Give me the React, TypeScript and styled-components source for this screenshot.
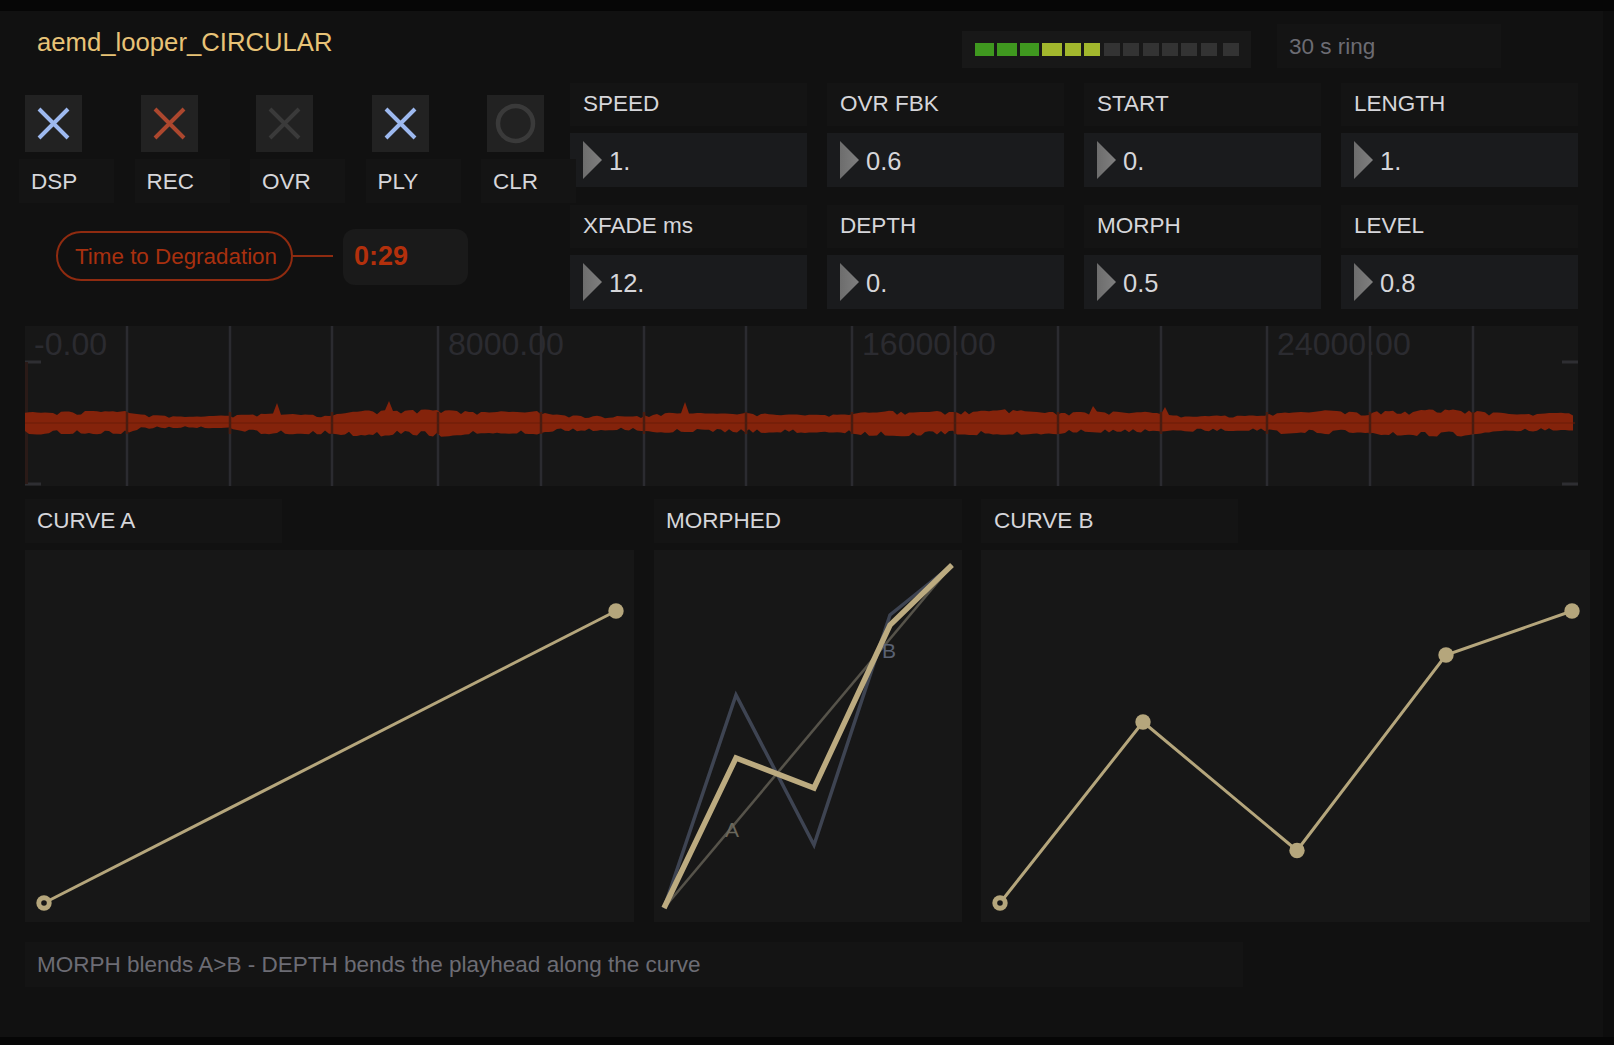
import React from "react";
import styled, { createGlobalStyle } from "styled-components";

const Global = createGlobalStyle`
  html, body {
    margin: 0;
    padding: 0;
    background: #111;
  }
  body {
    font-family: "Liberation Sans", Arial, sans-serif;
  }
`;

const Frame = styled.div`
  width: 1614px;
  height: 1045px;
  display: flex;
  flex-direction: column;
  overflow: hidden;
  background: #111;
`;

const EdgeBar = styled.div<{ h: number }>`
  flex: 0 0 ${(p) => p.h}px;
  background: #060606;
`;

const Middle = styled.div`
  flex: 1;
  display: flex;
  min-height: 0;
`;

const Body = styled.main`
  flex: 0 0 1603px;
  padding-left: 25px;
  box-sizing: border-box;
`;

const SideStrip = styled.div`
  flex: 1;
  background: #0d0d0d;
`;

const Header = styled.header`
  height: 72px;
  display: flex;
`;

const Title = styled.h1`
  width: 937px;
  margin: 0;
  padding: 15px 0 0 12px;
  box-sizing: border-box;
  font-size: 25.7px;
  line-height: 32px;
  font-weight: 400;
  color: #e8c377;
`;

const Meter = styled.div`
  width: 289px;
  height: 37px;
  margin-top: 20px;
  padding: 12px 0 0 13px;
  box-sizing: border-box;
  display: flex;
  background: #181818;
`;

const Segment = styled.span<{ w: number; gap: number; tone: string }>`
  width: ${(p) => p.w}px;
  height: 13px;
  margin-right: ${(p) => p.gap}px;
  background: ${(p) => p.tone};
`;

const Ring = styled.div`
  width: 224px;
  height: 44px;
  margin: 13px 0 0 26px;
  padding-left: 12px;
  box-sizing: border-box;
  background: #141414;
  color: #6c6c73;
  font-size: 22.5px;
  line-height: 46px;
`;

const Upper = styled.section`
  display: flex;
`;

const LeftColumn = styled.div`
  position: relative;
  z-index: 1;
  flex: 0 0 551px;
  min-width: 0;
  margin-left: -6px;
  padding-top: 12px;
`;

const Toggles = styled.div`
  display: grid;
  grid-template-columns: repeat(5, 95px);
  column-gap: 20.5px;
`;

const Toggle = styled.div`
  display: flex;
  flex-direction: column;
  gap: 7px;
`;

const ToggleButton = styled.div`
  width: 57px;
  height: 57px;
  margin-left: 6px;
  display: flex;
  align-items: center;
  justify-content: center;
  background: #222;
`;

const ToggleLabel = styled.div`
  height: 44px;
  padding-left: 12px;
  background: #141414;
  color: #d6d6da;
  font-size: 22.5px;
  line-height: 45px;
`;

const DegradationRow = styled.div`
  display: flex;
  align-items: flex-start;
  margin: 26px 0 0 37px;
`;

const Pill = styled.div`
  width: 237px;
  height: 50px;
  margin-top: 2px;
  padding-left: 3px;
  box-sizing: border-box;
  border: 2px solid #8f2b10;
  border-radius: 25px;
  text-align: center;
  color: #a8300f;
  font-size: 22.4px;
  line-height: 47px;
`;

const Connector = styled.div`
  width: 40px;
  height: 2px;
  margin-top: 26px;
  background: #8f2b10;
`;

const TimeBox = styled.div`
  width: 125px;
  height: 56px;
  margin-left: 10px;
  padding-left: 11px;
  box-sizing: border-box;
  border-radius: 12px;
  background: #1a1a1a;
  color: #b3300c;
  font-size: 27px;
  font-weight: 700;
  line-height: 54px;
`;

const ParamGrid = styled.div`
  display: grid;
  grid-template-columns: repeat(4, 237px);
  column-gap: 20px;
  row-gap: 18px;
`;

const Param = styled.div`
  display: flex;
  flex-direction: column;
  gap: 7px;
`;

const ParamLabel = styled.div`
  height: 43px;
  padding-left: 13px;
  background: #141414;
  color: #d6d6da;
  font-size: 22.5px;
  line-height: 42px;
`;

const ParamValue = styled.div`
  height: 54px;
  padding-left: 13px;
  display: flex;
  align-items: center;
  gap: 7px;
  background: #1a1b1d;
  color: #d6d6da;
  font-size: 25.5px;
`;

const ValueText = styled.span`
  margin-top: 2px;
`;

const Arrow = styled.span`
  width: 19px;
  height: 38px;
  background: linear-gradient(90deg, #6d6d6d, #7f7f7f);
  clip-path: polygon(0 0, 100% 50%, 0 100%);
`;

const WavePanel = styled.section`
  width: 1553px;
  height: 160px;
  margin-top: 17px;
  background: #171717;
`;

const WaveSvg = styled.svg`
  display: block;
  font-family: "Liberation Sans", Arial, sans-serif;
`;

const Curves = styled.section`
  display: flex;
  margin-top: 13px;
`;

const CurveColumn = styled.div<{ w: number; gap: number }>`
  flex: 0 0 ${(p) => p.w}px;
  margin-right: ${(p) => p.gap}px;
`;

const CurveLabel = styled.div<{ w: number; inset: number }>`
  width: ${(p) => p.w}px;
  height: 44px;
  padding-left: ${(p) => p.inset}px;
  box-sizing: border-box;
  background: #141414;
  color: #d6d6da;
  font-size: 22.5px;
  line-height: 44px;
`;

const CurvePanel = styled.div`
  height: 372px;
  margin-top: 7px;
  background: #171717;
`;

const CurveSvg = styled.svg`
  display: block;
  font-family: "Liberation Sans", Arial, sans-serif;
`;

const Footer = styled.footer`
  width: 1218px;
  height: 45px;
  margin-top: 20px;
  padding-left: 12px;
  box-sizing: border-box;
  background: #141414;
  color: #6c6c74;
  font-size: 22.5px;
  line-height: 45px;
`;

const segments = [
  { w: 19, gap: 3, tone: "#3f981f" },
  { w: 20, gap: 3, tone: "#3f981f" },
  { w: 19, gap: 3, tone: "#3f981f" },
  { w: 20, gap: 3, tone: "#a2b72d" },
  { w: 16, gap: 3.4, tone: "#a2b72d" },
  { w: 16, gap: 3.4, tone: "#a2b72d" },
  { w: 16, gap: 3.4, tone: "#333" },
  { w: 16, gap: 3.4, tone: "#333" },
  { w: 16, gap: 3.4, tone: "#333" },
  { w: 16, gap: 3.4, tone: "#333" },
  { w: 16, gap: 3.4, tone: "#333" },
  { w: 16, gap: 6, tone: "#333" },
  { w: 16, gap: 0, tone: "#333" },
];

const toggles = [
  { label: "DSP", tone: "#9db9ef", round: false },
  { label: "REC", tone: "#ac472e", round: false },
  { label: "OVR", tone: "#3a3a3a", round: false },
  { label: "PLY", tone: "#9db9ef", round: false },
  { label: "CLR", tone: "#3a3a3a", round: true },
];

const params = [
  { label: "SPEED", value: "1." },
  { label: "OVR FBK", value: "0.6" },
  { label: "START", value: "0." },
  { label: "LENGTH", value: "1." },
  { label: "XFADE ms", value: "12." },
  { label: "DEPTH", value: "0." },
  { label: "MORPH", value: "0.5" },
  { label: "LEVEL", value: "0.8" },
];

// grid line positions, relative to the wave panel
const gridLines = [102, 205, 307, 413, 516, 619, 721, 827, 930, 1033, 1136, 1242, 1345, 1448];
const rulerLabels = [
  { x: 9, text: "-0.00" },
  { x: 423, text: "8000.00" },
  { x: 837, text: "16000.00" },
  { x: 1252, text: "24000.00" },
];

// wave envelope: [from, to, top, bottom]
const envelope = [
  [0, 102, 13, 13],
  [102, 205, 7.5, 6],
  [205, 307, 10, 12],
  [307, 413, 14, 14.5],
  [413, 516, 13, 12],
  [516, 619, 8, 8.5],
  [619, 721, 11, 11],
  [721, 827, 10, 11.5],
  [827, 930, 13.5, 13.5],
  [930, 1033, 14, 13.5],
  [1033, 1136, 13, 10],
  [1136, 1242, 8, 9],
  [1242, 1345, 14, 12.5],
  [1345, 1448, 15, 14.5],
  [1448, 1550, 10.5, 9],
];
const spikes = [
  { x: 252, h: 20 },
  { x: 364, h: 22 },
  { x: 660, h: 21 },
  { x: 1140, h: 16 },
  { x: 1068, h: 17 },
];

function buildWave() {
  let seed = 4217;
  const rand = () => {
    seed = (seed * 16807) % 2147483647;
    return seed / 2147483647;
  };
  const top: string[] = [];
  const bottom: string[] = [];
  let upAmp = envelope[0][2];
  let downAmp = envelope[0][3];
  let upDrift = 0.85;
  let downDrift = 0.85;
  for (let x = 0; x <= 1550; x += 4) {
    const part = envelope.find((e) => x >= e[0] && x < e[1]) || envelope[envelope.length - 1];
    upAmp += (part[2] - upAmp) * 0.25;
    downAmp += (part[3] - downAmp) * 0.25;
    upDrift += (0.85 - upDrift) * 0.2 + (rand() - 0.5) * 0.12;
    downDrift += (0.85 - downDrift) * 0.2 + (rand() - 0.5) * 0.12;
    const spike = spikes.find((s) => Math.abs(s.x - x) < 2);
    const upNotch = rand() < 0.16 ? 0.75 : 1;
    const downNotch = rand() < 0.22 ? 0.7 : 1;
    const up = spike ? spike.h : upAmp * upDrift * upNotch;
    const down = downAmp * downDrift * downNotch;
    top.push(`${x},${(97 - up).toFixed(1)}`);
    bottom.unshift(`${x},${(97 + down).toFixed(1)}`);
  }
  return [...top, ...bottom].join(" ");
}

const wavePoints = buildWave();

function ToggleIcon({ tone, round }: { tone: string; round: boolean }) {
  return (
    <svg width="57" height="57" viewBox="0 0 57 57">
      {round ? (
        <circle cx="28.5" cy="28.5" r="17.5" fill="none" stroke={tone} strokeWidth="4.5" />
      ) : (
        <path d="M14 14 L43 43 M43 14 L14 43" fill="none" stroke={tone} strokeWidth="4" />
      )}
    </svg>
  );
}

function Wave() {
  return (
    <WavePanel>
      <WaveSvg width="1553" height="160" viewBox="0 0 1553 160">
        {rulerLabels.map((item) => (
          <text key={item.text} x={item.x} y="29" fontSize="32.1" fill="#2b2b30">
            {item.text}
          </text>
        ))}
        {gridLines.map((x) => (
          <line key={x} x1={x} x2={x} y1="0" y2="160" stroke="#2b2b30" strokeWidth="2.5" />
        ))}
        <path d="M0 36 H16 M0 158 H16 M1537 36 H1553 M1537 158 H1553" stroke="#2e2e32" strokeWidth="3" />
        <line x1="1.5" x2="1.5" y1="36" y2="158" stroke="#2a1a17" strokeWidth="3" />
        <polygon points={wavePoints} fill="#84230b" />
        <line x1="0" x2="1550" y1="97" y2="97" stroke="#6a1d08" strokeWidth="1" />
        {gridLines.map((x) => (
          <line key={x} x1={x} x2={x} y1="86" y2="108" stroke="#4a1c10" strokeWidth="2.5" />
        ))}
      </WaveSvg>
    </WavePanel>
  );
}

type Point = [number, number];

function toPath(points: Point[]) {
  return points.map((p) => p.join(",")).join(" ");
}

function BreakpointCurve({ points }: { points: Point[] }) {
  return (
    <CurveSvg width="609" height="372" viewBox="0 0 609 372">
      <polyline points={toPath(points)} fill="none" stroke="#b5a67c" strokeWidth="3" />
      {points.map((p, index) => (
        <circle key={index} cx={p[0]} cy={p[1]} r="7.7" fill="#b5a67c" />
      ))}
      <circle cx={points[0][0]} cy={points[0][1]} r="2.8" fill="#171717" />
    </CurveSvg>
  );
}

function MorphCurve() {
  return (
    <CurveSvg width="308" height="372" viewBox="0 0 308 372">
      <polyline points="10,358 298,15" fill="none" stroke="#56534a" strokeWidth="2.6" />
      <polyline
        points="10,358 82,145 160,295 236,65 298,15"
        fill="none"
        stroke="#3e4452"
        strokeWidth="3.5"
      />
      <polyline
        points="10,358 82,208 160,238 236,75 298,15"
        fill="none"
        stroke="#bcab80"
        strokeWidth="5.5"
      />
      <text x="71" y="287" fontSize="21" fill="#6a675c">
        A
      </text>
      <text x="228" y="108" fontSize="21" fill="#5a6273">
        B
      </text>
    </CurveSvg>
  );
}

const curveA: Point[] = [
  [19, 353],
  [591, 61],
];
const curveB: Point[] = [
  [19, 353],
  [162, 172],
  [316, 300.5],
  [465, 105],
  [591, 61],
];

export default function App() {
  return (
    <Frame>
      <Global />
      <EdgeBar h={11} />
      <Middle>
        <Body>
          <Header>
            <Title>aemd_looper_CIRCULAR</Title>
            <Meter>
              {segments.map((s, index) => (
                <Segment key={index} w={s.w} gap={s.gap} tone={s.tone} />
              ))}
            </Meter>
            <Ring>30 s ring</Ring>
          </Header>
          <Upper>
            <LeftColumn>
              <Toggles>
                {toggles.map((t) => (
                  <Toggle key={t.label}>
                    <ToggleButton>
                      <ToggleIcon tone={t.tone} round={t.round} />
                    </ToggleButton>
                    <ToggleLabel>{t.label}</ToggleLabel>
                  </Toggle>
                ))}
              </Toggles>
              <DegradationRow>
                <Pill>Time to Degradation</Pill>
                <Connector />
                <TimeBox>0:29</TimeBox>
              </DegradationRow>
            </LeftColumn>
            <ParamGrid>
              {params.map((p) => (
                <Param key={p.label}>
                  <ParamLabel>{p.label}</ParamLabel>
                  <ParamValue>
                    <Arrow />
                    <ValueText>{p.value}</ValueText>
                  </ParamValue>
                </Param>
              ))}
            </ParamGrid>
          </Upper>
          <Wave />
          <Curves>
            <CurveColumn w={609} gap={20}>
              <CurveLabel w={257} inset={12}>CURVE A</CurveLabel>
              <CurvePanel>
                <BreakpointCurve points={curveA} />
              </CurvePanel>
            </CurveColumn>
            <CurveColumn w={308} gap={19}>
              <CurveLabel w={308} inset={12}>MORPHED</CurveLabel>
              <CurvePanel>
                <MorphCurve />
              </CurvePanel>
            </CurveColumn>
            <CurveColumn w={609} gap={0}>
              <CurveLabel w={257} inset={13}>CURVE B</CurveLabel>
              <CurvePanel>
                <BreakpointCurve points={curveB} />
              </CurvePanel>
            </CurveColumn>
          </Curves>
          <Footer>MORPH blends A&gt;B - DEPTH bends the playhead along the curve</Footer>
        </Body>
        <SideStrip />
      </Middle>
      <EdgeBar h={8} />
    </Frame>
  );
}
